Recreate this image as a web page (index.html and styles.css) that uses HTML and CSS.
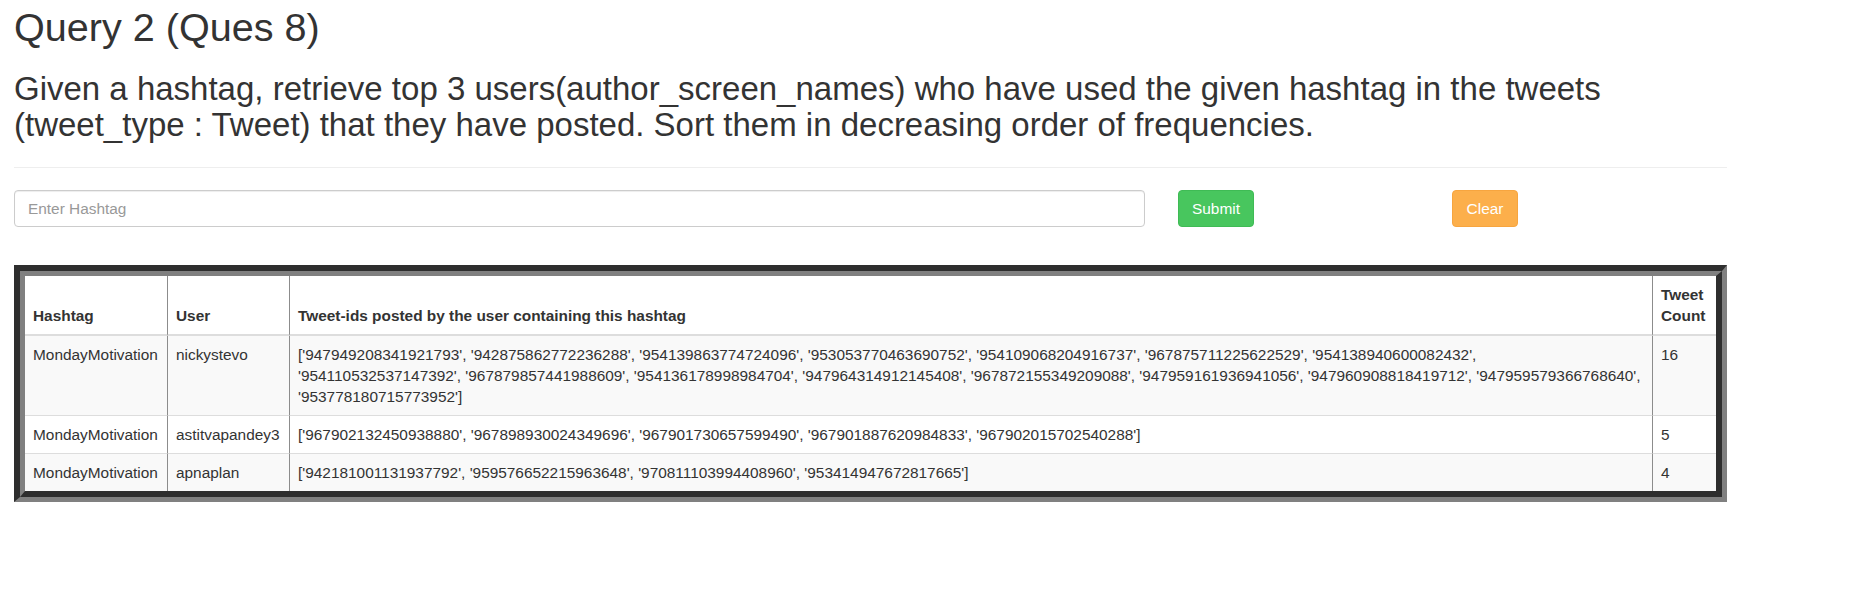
FILE: index.html
```html
<!DOCTYPE html>
<html lang="en">
<head>
<meta charset="utf-8">
<title>Query 2 (Ques 8)</title>
<link rel="stylesheet" href="styles.css">
</head>
<body>
<main class="page">
  <h1 class="title">Query 2 (Ques 8)</h1>
  <h2 class="subtitle">Given a hashtag, retrieve top 3 users(author_screen_names) who have used the given hashtag in the tweets (tweet_type : Tweet) that they have posted. Sort them in decreasing order of frequencies.</h2>
  <hr class="rule">
  <form class="query-form">
    <input class="hashtag-input" type="text" placeholder="Enter Hashtag">
    <button class="btn btn-submit" type="button">Submit</button>
    <button class="btn btn-clear" type="button">Clear</button>
  </form>
  <div class="table-frame">
    <table class="results">
      <colgroup>
        <col class="col-hashtag">
        <col class="col-user">
        <col class="col-ids">
        <col class="col-count">
      </colgroup>
      <thead>
        <tr>
          <th>Hashtag</th>
          <th>User</th>
          <th>Tweet-ids posted by the user containing this hashtag</th>
          <th>Tweet Count</th>
        </tr>
      </thead>
      <tbody>
        <tr class="odd">
          <td>MondayMotivation</td>
          <td>nickystevo</td>
          <td>['947949208341921793', '942875862772236288', '954139863774724096', '953053770463690752', '954109068204916737', '967875711225622529', '954138940600082432',<br>'954110532537147392', '967879857441988609', '954136178998984704', '947964314912145408', '967872155349209088', '947959161936941056', '947960908818419712', '947959579366768640',<br>'953778180715773952']</td>
          <td>16</td>
        </tr>
        <tr>
          <td>MondayMotivation</td>
          <td>astitvapandey3</td>
          <td>['967902132450938880', '967898930024349696', '967901730657599490', '967901887620984833', '967902015702540288']</td>
          <td>5</td>
        </tr>
        <tr class="odd">
          <td>MondayMotivation</td>
          <td>apnaplan</td>
          <td>['942181001131937792', '959576652215963648', '970811103994408960', '953414947672817665']</td>
          <td>4</td>
        </tr>
      </tbody>
    </table>
  </div>
</main>
</body>
</html>
```

FILE: styles.css
```css
* {
  box-sizing: border-box;
}

html, body {
  margin: 0;
  padding: 0;
  background: #ffffff;
}

body {
  font-family: "Liberation Sans", Arial, Helvetica, sans-serif;
  color: #333333;
  font-size: 15.4px;
  line-height: 1.42857;
}

.page {
  width: 1727px;
  padding-left: 14px;
}

.title {
  margin: 6px 0 0 0;
  font-size: 39.6px;
  font-weight: 500;
  line-height: 1.1;
}

.subtitle {
  margin: 21px 0 0 0;
  font-size: 33px;
  font-weight: 500;
  line-height: 1.1;
}

.rule {
  margin: 24px 0 0 0;
  border: 0;
  border-top: 1px solid #eeeeee;
  height: 0;
}

.query-form {
  display: flex;
  align-items: stretch;
  margin-top: 22px;
  height: 37px;
}

.hashtag-input {
  width: 1131px;
  height: 37px;
  padding: 0 13px;
  border: 1px solid #cccccc;
  border-radius: 4px;
  font-family: inherit;
  font-size: 15.4px;
  color: #555555;
  background: #ffffff;
  box-shadow: inset 0 1px 1px rgba(0, 0, 0, 0.075);
}

.hashtag-input::placeholder {
  color: #999999;
}

.btn {
  height: 37px;
  padding: 0 13px;
  border: 1px solid transparent;
  border-radius: 4px;
  font-family: inherit;
  font-size: 15.4px;
  color: #ffffff;
  cursor: pointer;
}

.btn-submit {
  margin-left: 33px;
  width: 76px;
  background: #48c65e;
  border-color: #3fbb55;
}

.btn-clear {
  margin-left: 198px;
  width: 66px;
  background: #fcaf4b;
  border-color: #f7a53f;
}

.table-frame {
  margin-top: 38px;
  width: 1713px;
  border-style: solid;
  border-width: 6px 5px 5px 6px;
  border-color: #2e2e2e #808080 #808080 #2e2e2e;
}

.results {
  width: 100%;
  table-layout: fixed;
  border-collapse: separate;
  border-spacing: 0;
  border-style: solid;
  border-width: 5px 6px 6px 5px;
  border-color: #808080 #2e2e2e #2e2e2e #808080;
  font-size: 15.4px;
  line-height: 21px;
  background: #ffffff;
}

.col-hashtag { width: 142px; }
.col-user { width: 122px; }
.col-count { width: 64px; }

.results th,
.results td {
  padding: 8px;
  text-align: left;
  border-left: 1px solid #8c8c8c;
}

.results th:first-child,
.results td:first-child {
  border-left: 0;
}

.results th {
  font-weight: bold;
  vertical-align: bottom;
  border-bottom: 2px solid #dddddd;
}

.results td {
  vertical-align: top;
  border-top: 1px solid #dddddd;
}

.results tbody tr:first-child td {
  border-top: 0;
}

.results tr.odd td {
  background: #f9f9f9;
}
```
